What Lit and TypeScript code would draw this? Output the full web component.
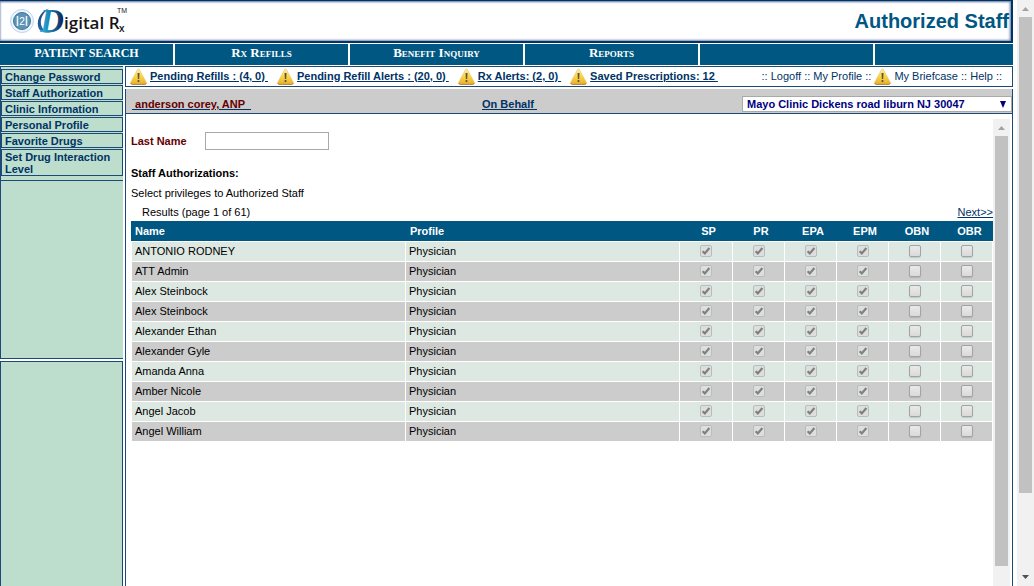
import { LitElement, html, css, svg } from "lit";
import { customElement } from "lit/decorators.js";

const MENU = [
  "Change Password",
  "Staff Authorization",
  "Clinic Information",
  "Personal Profile",
  "Favorite Drugs",
  "Set Drug Interaction Level",
];
const ALERTS = [
  "Pending Refills : (4, 0)",
  "Pending Refill Alerts : (20, 0)",
  "Rx Alerts: (2, 0)",
  "Saved Prescriptions: 12",
];
const STAFF = [
  "ANTONIO RODNEY",
  "ATT Admin",
  "Alex Steinbock",
  "Alex Steinbock",
  "Alexander Ethan",
  "Alexander Gyle",
  "Amanda Anna",
  "Amber Nicole",
  "Angel Jacob",
  "Angel William",
];
const RIGHTS = [
  { code: "SP", on: true },
  { code: "PR", on: true },
  { code: "EPA", on: true },
  { code: "EPM", on: true },
  { code: "OBN", on: false },
  { code: "OBR", on: false },
];

const warning = (id: string) => html`
  <svg class="warn" viewBox="0 0 17 17" width="17" height="17" aria-hidden="true">
    <defs>
      <linearGradient id=${id} x1="0" y1="0" x2="0" y2="1">
        <stop offset="0" stop-color="#fdf3b4" />
        <stop offset="0.5" stop-color="#fbd548" />
        <stop offset="1" stop-color="#eab02a" />
      </linearGradient>
    </defs>
    <path d="M7.6 1.4Q8.5 0 9.4 1.4L16.2 14.2Q17 16.2 15.2 16.2H1.8Q0 16.2.8 14.2Z" fill="url(#${id})" stroke="#e2b75a" stroke-width=".5" />
    <path d="M.9 15.4Q1.2 16.4 2.2 16.4H14.8Q15.8 16.4 16.1 15.4" fill="none" stroke="#a07c3a" stroke-width=".9" />
    <path d="M7.5 5H9.6L9.2 11H7.9Z" fill="#5a543f" />
    <circle cx="8.5" cy="13.1" r="1.1" fill="#5a543f" />
  </svg>
`;

@customElement("app-root")
export class AppRoot extends LitElement {
  static styles = css`
    :host {
      display: flex;
      height: 100vh;
      overflow: hidden;
      background: #fff;
      color: #000;
      font: 11px/12px "Liberation Sans", Arial, sans-serif;
    }
    * {
      box-sizing: border-box;
    }
    a {
      color: #003366;
    }
    .page {
      flex: 1;
      min-width: 0;
      margin-right: 4px;
      display: flex;
      flex-direction: column;
    }
    .banner {
      height: 43px;
      flex: none;
      display: flex;
      align-items: center;
      justify-content: space-between;
      padding: 0 2px 0 8px;
      border: solid #003366;
      border-width: 1px 2px 2px 0;
      box-shadow: inset -1px 0 3px #6f87ab, inset 0 1px 2px #6f87ab, inset 0 -1px 2px #9fb0c8;
    }
    .logo {
      display: block;
    }
    h1 {
      margin: 0;
      font-size: 20px;
      line-height: 24px;
      color: #005782;
    }
    .nav {
      flex: none;
      display: grid;
      grid-template-columns: repeat(5, 173px) 1fr;
      gap: 2px;
      padding-top: 1px;
    }
    .nav a {
      height: 21px;
      background: #005782;
      color: #fff;
      font: bold 13px/18px "Liberation Serif", "Times New Roman", serif;
      text-align: center;
      text-decoration: none;
      font-variant: small-caps;
    }
    .nav .caps {
      font-size: 12px;
    }
    .below {
      flex: 1;
      min-height: 0;
      display: flex;
      gap: 2px;
      padding-top: 1px;
    }
    .side {
      width: 123px;
      flex: none;
      display: flex;
      flex-direction: column;
      gap: 2px;
    }
    .panel {
      background: #bddecd;
      border: 1px solid #1c4a78;
    }
    .upper {
      height: 293px;
      flex: none;
      border-right: 0;
      display: flex;
      flex-direction: column;
    }
    .lower {
      flex: 1;
      border-bottom: 0;
    }
    .menu {
      list-style: none;
      margin: 0;
      padding: 2px 0 4px;
      border-bottom: 1px solid #1c4a78;
      display: flex;
      flex-direction: column;
      gap: 1px;
    }
    .menu a {
      display: block;
      border: 1px solid #1c4a78;
      padding: 1px 2px 0 3px;
      font-weight: bold;
      text-decoration: none;
    }
    .main {
      flex: 1;
      min-width: 0;
      display: flex;
      flex-direction: column;
      gap: 2px;
    }
    .alerts {
      display: flex;
      align-items: center;
      height: 21px;
      flex: none;
      border: 1px solid #1c4a78;
      padding: 0 10px 0 4px;
      white-space: pre;
    }
    .alert {
      display: flex;
      align-items: center;
      gap: 3px;
      margin-right: 9px;
      font-weight: bold;
    }
    .alerts a {
      padding-bottom: 2px;
    }
    .quick {
      margin-left: auto;
      display: flex;
      align-items: center;
      gap: 3px;
      color: #003366;
    }
    .quick a {
      text-decoration: none;
    }
    .quick span {
      padding-bottom: 2px;
    }
    .frame {
      flex: 1;
      min-height: 0;
      display: flex;
      flex-direction: column;
      border: solid #1c4a78;
      border-width: 0 1px;
    }
    .who {
      flex: none;
      height: 25px;
      display: grid;
      grid-template-columns: 350px 1fr 270px;
      align-items: center;
      padding: 6px 0 0 6px;
      background: #ccc;
      border-bottom: 1px solid #1c4a78;
      font-weight: bold;
      white-space: pre;
    }
    .user {
      color: #660000;
      text-decoration-color: #003366;
    }
    .clinic {
      position: relative;
      height: 18px;
    }
    .clinic select {
      appearance: none;
      width: 100%;
      height: 16px;
      margin: 1px 0;
      padding: 0 4px;
      border: 1px solid #a9a9a9;
      border-radius: 0;
      background: #fff;
      color: #000080;
      font: bold 11px/14px "Liberation Sans", Arial, sans-serif;
    }
    .clinic svg {
      position: absolute;
      right: 6px;
      top: 6px;
      pointer-events: none;
    }
    .scroll {
      flex: 1;
      min-height: 0;
      display: flex;
      padding: 5px 2px 0 5px;
    }
    .content {
      flex: 1;
      min-width: 0;
    }
    .search {
      display: flex;
      align-items: center;
      gap: 18px;
      padding-top: 13px;
      color: #660000;
      font-weight: bold;
    }
    .search input {
      width: 124px;
      height: 18px;
      padding: 1px 2px;
      border: 1px solid #a9a9a9;
      font: inherit;
    }
    h2 {
      margin: 17px 0 8px;
      font-size: 11px;
      line-height: 12px;
    }
    p {
      margin: 0;
    }
    .results {
      display: flex;
      justify-content: space-between;
      padding: 7px 0 3px 11px;
    }
    table {
      width: 100%;
      table-layout: fixed;
      border-spacing: 0;
    }
    th {
      height: 20px;
      padding: 0 0 0 4px;
      background: #005782;
      color: #fff;
      text-align: left;
    }
    th.profile {
      padding-left: 5px;
    }
    th.right {
      padding-left: 6px;
      text-align: center;
    }
    td {
      height: 20px;
      padding: 0 3px 2px;
      background: #dde8e2;
      border: solid #fff;
      border-width: 1px 0 0 1px;
    }
    tr:nth-child(even) td {
      background: #ccc;
    }
    td:last-child {
      border-right-width: 1px;
    }
    td.tick {
      padding: 0 0 2px;
      text-align: center;
    }
    .first {
      width: 53px;
    }
    .rest {
      width: 52px;
    }
    td input {
      appearance: none;
      display: block;
      width: 12px;
      height: 12px;
      margin: 0 auto;
      border: 1px solid #a3a3a3;
      border-radius: 2px;
      background: linear-gradient(#e9e9e9, #dadada);
      box-shadow: 0 1px 1px #0002;
    }
    td input:checked {
      border-color: #b9bdbb;
      box-shadow: none;
      background: url("data:image/svg+xml,%3Csvg xmlns='http://www.w3.org/2000/svg' viewBox='0 0 10 10'%3E%3Cpath d='M1.6 5.2L3.8 7.4L8.4 2' fill='none' stroke='%23808080' stroke-width='2.2'/%3E%3C/svg%3E"),
        #dcdfdd;
    }
    .bar {
      flex: none;
      display: flex;
      flex-direction: column;
      align-items: center;
      background: #f1f1f1;
      width: 17px;
    }
    .bar svg {
      flex: none;
      display: block;
    }
    .thumb {
      width: 13px;
      background: #c1c1c1;
    }
    .outer .thumb {
      flex: 476;
    }
    .outer .space {
      flex: 76;
    }
    .inner .thumb {
      flex: 430;
    }
    .inner .space {
      flex: 20;
    }
  `;

  private logo() {
    return html`<svg class="logo" width="124" height="38" viewBox="0 0 124 38" role="img" aria-label="Digital Rx">
      <defs>
        <linearGradient id="dg" x1="0" y1="0" x2="1" y2="0">
          <stop offset="0" stop-color="#2fc0e0" />
          <stop offset=".5" stop-color="#1878ac" />
          <stop offset="1" stop-color="#0f1a4c" />
        </linearGradient>
        <linearGradient id="sw" x1="0" y1="0" x2="1" y2="1">
          <stop offset="0" stop-color="#123a72" />
          <stop offset=".6" stop-color="#2a6fb4" />
          <stop offset="1" stop-color="#3fb59a" />
        </linearGradient>
      </defs>
      <circle cx="14" cy="19" r="11.5" fill="#eef5fc" stroke="#bcd5ee" />
      <circle cx="14" cy="19" r="8.5" fill="#5d93b5" stroke="#3f7699" />
      <path d="M9.5 14V24M18.5 14V24" stroke="#e7f2f8" stroke-width="1.6" />
      <text x="14" y="23" text-anchor="middle" font-family="Liberation Sans" font-size="10" fill="#fff">2</text>
      <path d="M41 6.5C32 9 27.500 20 31 27C34 32.500 43 31 47 29C42 30 36 29.500 34 25C31 19 34 11 41 6.5Z" fill="url(#sw)" />
      <text x="32" y="30" font-family="Liberation Serif" font-size="33" font-style="italic" font-weight="bold" fill="url(#dg)">D</text>
      <text x="56" y="27" font-family="Open Sans" font-size="17" font-weight="600" fill="#151515">igital R</text>
      <text x="111" y="30" font-family="Open Sans" font-size="10" font-weight="600" fill="#151515">x</text>
      <text x="109" y="11" font-family="Liberation Sans" font-size="7" fill="#222">TM</text>
    </svg>`;
  }

  private arrow(up: boolean) {
    return html`<svg width="17" height="17" viewBox="0 0 17 17" aria-hidden="true">
      ${up
        ? svg`<path d="M5 11H12L8.5 7Z" fill="#a3a3a3" />`
        : svg`<path d="M5 6H12L8.5 10Z" fill="#505050" />`}
    </svg>`;
  }

  render() {
    return html`
      <div class="page">
        <header class="banner">
          ${this.logo()}
          <h1>Authorized Staff</h1>
        </header>
        <nav class="nav">
          <a class="caps" href="#">PATIENT SEARCH</a>
          <a href="#">Rx Refills</a>
          <a href="#">Benefit Inquiry</a>
          <a href="#">Reports</a>
          <a href="#" aria-label="More"></a>
          <a href="#" aria-label="Other"></a>
        </nav>
        <div class="below">
          <aside class="side">
            <div class="panel upper">
              <ul class="menu">
                ${MENU.map((m) => html`<li><a href="#">${m}</a></li>`)}
              </ul>
            </div>
            <div class="panel lower"></div>
          </aside>
          <main class="main">
            <div class="alerts">
              ${ALERTS.map((a, i) => html`<div class="alert">${warning("w" + i)}<a href="#">${a + " "}</a></div>`)}
              <div class="quick">
                <span>:: <a href="#">Logoff</a> :: <a href="#">My Profile</a> ::</span>${warning("wq")}<span><a href="#">My Briefcase</a> :: <a href="#">Help</a> ::</span>
              </div>
            </div>
            <div class="frame">
              <div class="who"><div><a class="user" href="#"> anderson corey, ANP  </a></div><div><a href="#">On Behalf </a></div><div class="clinic"><select aria-label="Clinic"><option>Mayo Clinic Dickens road liburn NJ 30047</option></select><svg width="6" height="7" viewBox="0 0 6 7" aria-hidden="true"><path d="M0 0H6L3 7Z" fill="#000080" /></svg></div></div>
              <div class="scroll">
                <div class="content">
                  <div class="search">
                    <label for="last">Last Name</label>
                    <input id="last" type="text" />
                  </div>
                  <h2>Staff Authorizations:</h2>
                  <p>Select privileges to Authorized Staff</p>
                  <div class="results">
                    <span>Results (page 1 of 61)</span>
                    <a href="#">Next&gt;&gt;</a>
                  </div>
                  <table>
                    <colgroup>
                      <col /><col /><col class="first" /><col class="rest" /><col class="rest" /><col class="rest" /><col class="rest" /><col class="first" />
                    </colgroup>
                    <thead>
                      <tr>
                        <th>Name</th>
                        <th class="profile">Profile</th>
                        ${RIGHTS.map((r) => html`<th class="right">${r.code}</th>`)}
                      </tr>
                    </thead>
                    <tbody>
                      ${STAFF.map(
                        (name) => html`<tr>
                          <td>${name}</td>
                          <td>Physician</td>
                          ${RIGHTS.map(
                            (r) => html`<td class="tick">
                              <input type="checkbox" disabled ?checked=${r.on} aria-label="${r.code} for ${name}" />
                            </td>`
                          )}
                        </tr>`
                      )}
                    </tbody>
                  </table>
                </div>
                <div class="bar inner">
                  ${this.arrow(true)}
                  <div class="thumb"></div>
                  <div class="space"></div>
                </div>
              </div>
            </div>
          </main>
        </div>
      </div>
      <div class="bar outer">
        ${this.arrow(true)}
        <div class="thumb"></div>
        <div class="space"></div>
        ${this.arrow(false)}
      </div>
    `;
  }
}
